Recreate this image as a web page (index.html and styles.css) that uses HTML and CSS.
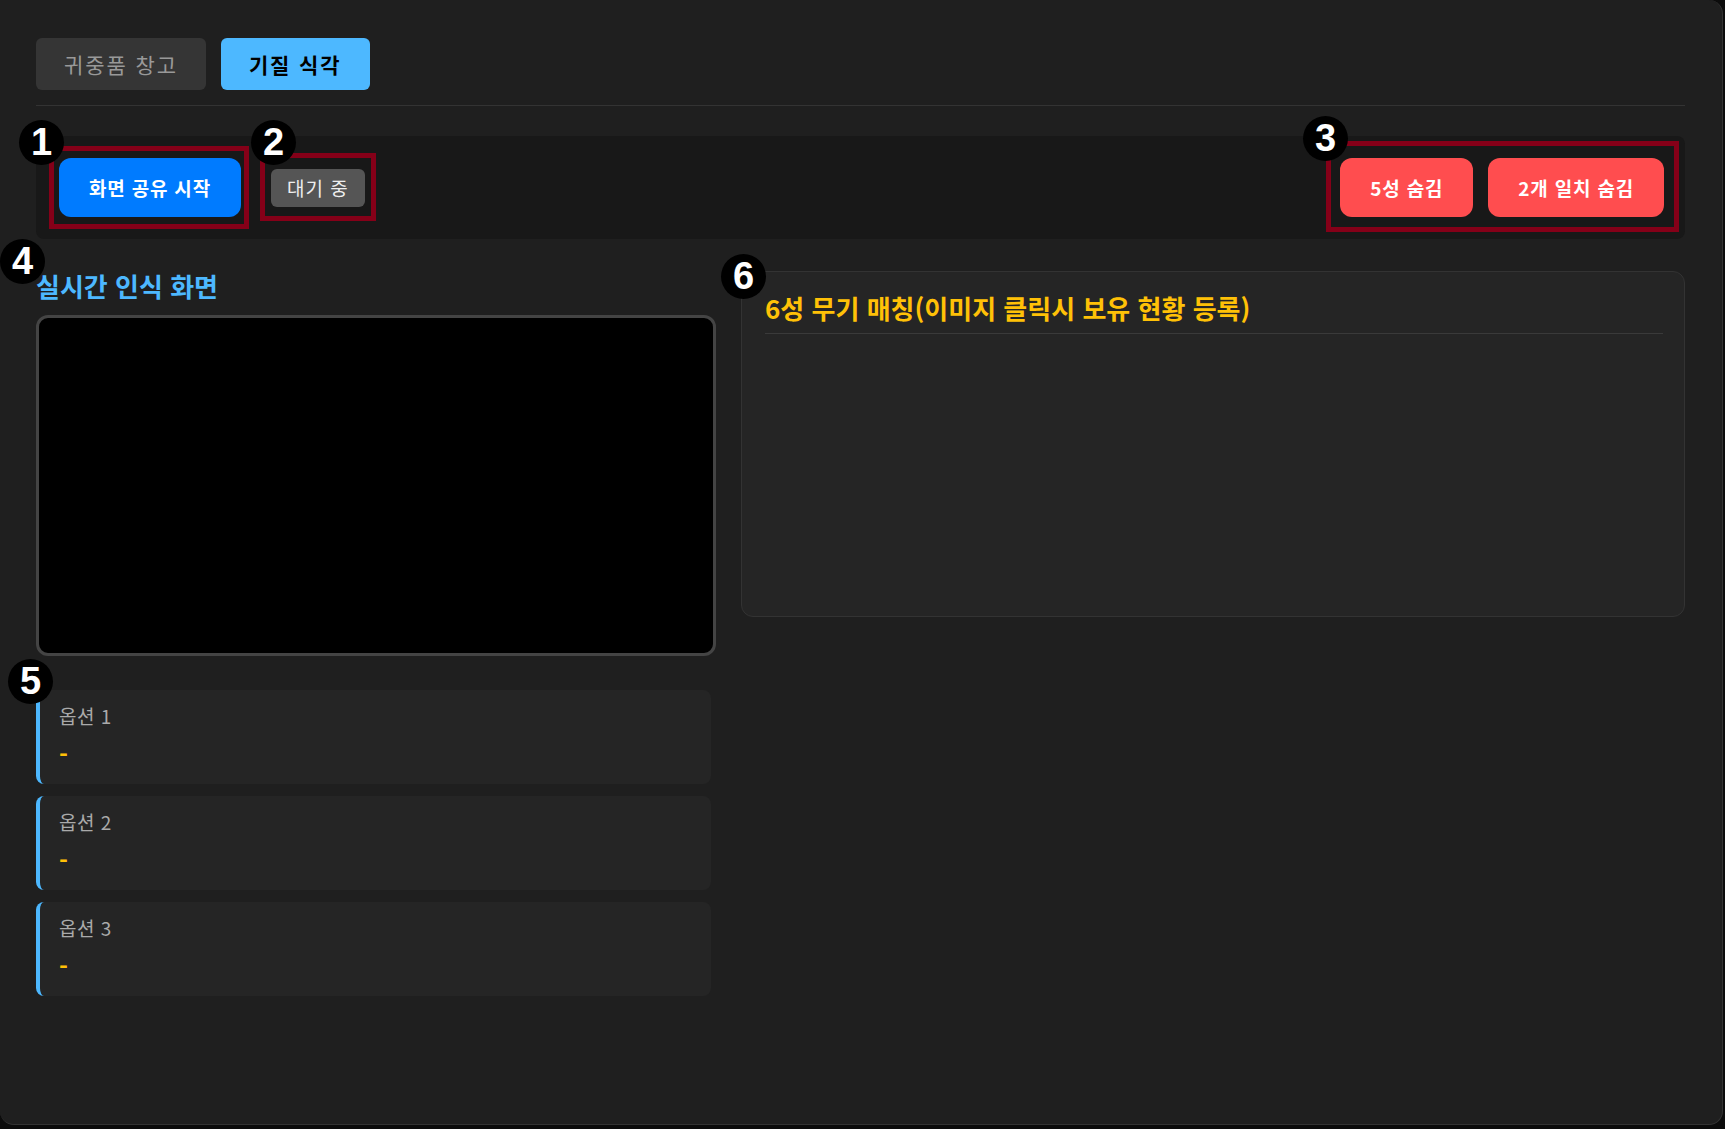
FILE: index.html
```html
<!DOCTYPE html>
<html lang="ko">

<head>
  <meta charset="UTF-8" />
  <meta name="viewport" content="width=device-width, initial-scale=1" />
  <title>기질 식각</title>
  <link rel="stylesheet" href="styles.css">
</head>

<body>

  <div class="app">
    <div class="tabs">
      <button class="tab">귀중품 창고</button>
      <button class="tab active">기질 식각</button>
    </div>

    <div class="controls">
      <div class="controls-left">
        <button class="btn-share" id="shareBtn">화면 공유 시작</button>
        <span class="status" id="status">대기 중</span>
      </div>
      <div class="controls-right">
        <button class="btn-hide">5성 숨김</button>
        <button class="btn-hide">2개 일치 숨김</button>
      </div>
    </div>

    <div class="main">
      <div class="left-col">
        <h3 class="section-title">실시간 인식 화면</h3>
        <div class="video"></div>

        <div class="options">
          <div class="option-card">
            <div class="option-label">옵션 1</div>
            <div class="option-value">-</div>
          </div>
          <div class="option-card">
            <div class="option-label">옵션 2</div>
            <div class="option-value">-</div>
          </div>
          <div class="option-card">
            <div class="option-label">옵션 3</div>
            <div class="option-value">-</div>
          </div>
        </div>
      </div>

      <div class="right-col">
        <div class="match-panel">
          <h3 class="match-title">6성 무기 매칭(이미지 클릭시 보유 현황 등록)</h3>
        </div>
      </div>
    </div>

    <!-- guide marks -->
    <div class="mark-box box-1"></div>
    <div class="mark-box box-2"></div>
    <div class="mark-box box-3"></div>
    <div class="mark-num num-1">1</div>
    <div class="mark-num num-2">2</div>
    <div class="mark-num num-3">3</div>
    <div class="mark-num num-4">4</div>
    <div class="mark-num num-5">5</div>
    <div class="mark-num num-6">6</div>
  </div>

</body>

</html>
```

FILE: styles.css
```css
/* Basic reset */
* {
  box-sizing: border-box;
}

body {
  margin: 0;
  background: #0c0c0c;
  font-family: 'Noto Sans CJK KR', 'Noto Sans', sans-serif;
  color: #eee;
}

.app {
  position: relative;
  width: 1723px;
  height: 1125px;
  padding: 38px 37px 40px 36px;
  background: #1f1f1f;
  border-right: 1px solid #333;
  border-bottom: 1px solid #333;
  border-radius: 0 14px 14px 14px;
}

/* Tabs */
.tabs {
  display: flex;
  gap: 15px;
  padding-bottom: 15px;
  border-bottom: 1px solid #333;
}

.tab {
  height: 52px;
  padding: 0 28px;
  border: none;
  border-radius: 6px;
  background: #353535;
  color: #999;
  font-family: inherit;
  font-size: 21px;
  letter-spacing: 1.9px;
  cursor: pointer;
}

.tab.active {
  background: #4db8ff;
  color: #000;
  font-weight: bold;
}

/* Control bar */
.controls {
  margin-top: 30px;
  display: flex;
  justify-content: space-between;
  align-items: center;
  padding: 22px 21px 22px 23px;
  background: #181818;
  border-radius: 8px;
}

.controls-left {
  display: flex;
  align-items: center;
  gap: 30px;
}

.controls-right {
  display: flex;
  gap: 15px;
}

.btn-share,
.btn-hide {
  height: 59px;
  padding: 0 30px;
  border: none;
  border-radius: 12px;
  color: #fff;
  font-family: inherit;
  font-size: 19px;
  font-weight: bold;
  letter-spacing: 0.8px;
  cursor: pointer;
}

.btn-share {
  background: #007bff;
}

.btn-hide {
  background: #ff4d4f;
}

.status {
  display: inline-block;
  height: 38px;
  line-height: 38px;
  padding: 0 16px;
  background: #555;
  border-radius: 6px;
  color: #eee;
  font-size: 19px;
  letter-spacing: 1px;
}

/* Main area */
.main {
  margin-top: 32px;
  display: grid;
  grid-template-columns: 680px 1fr;
  gap: 25px;
  align-items: start;
}

.section-title {
  margin: 0;
  color: #4db8ff;
  font-size: 26px;
  line-height: 30px;
}

.video {
  margin-top: 14px;
  width: 680px;
  height: 341px;
  background: #000;
  border: 3px solid #444;
  border-radius: 12px;
}

.options {
  margin-top: 34px;
  display: flex;
  flex-direction: column;
  gap: 12px;
  width: 675px;
}

.option-card {
  height: 94px;
  padding: 14px 20px 16px 19px;
  background: #252525;
  border-left: 4px solid #4db8ff;
  border-radius: 8px;
}

.option-label {
  color: #aaa;
  font-size: 19px;
  line-height: 24px;
  letter-spacing: 0.5px;
}

.option-value {
  margin-top: 12px;
  color: #ffc107;
  font-size: 24px;
  font-weight: bold;
  line-height: 28px;
}

.match-panel {
  height: 346px;
  padding: 21px 21px 22px 23px;
  background: #252525;
  border: 1px solid #333;
  border-radius: 12px;
}

.match-title {
  margin: 0;
  padding-bottom: 10px;
  border-bottom: 1px solid #3a3a3a;
  color: #ffc107;
  font-size: 26px;
  line-height: 30px;
}

/* Guide marks drawn over the page */
.mark-box {
  position: absolute;
  border: 5px solid #850018;
}

.box-1 {
  left: 49px;
  top: 146px;
  width: 200px;
  height: 83px;
}

.box-2 {
  left: 260px;
  top: 153px;
  width: 116px;
  height: 68px;
}

.box-3 {
  left: 1326px;
  top: 141px;
  width: 353px;
  height: 91px;
}

.mark-num {
  position: absolute;
  width: 45px;
  height: 45px;
  margin: -22px 0 0 -22px;
  border-radius: 50%;
  background: #000;
  color: #fff;
  font-family: 'Liberation Sans', Arial, sans-serif;
  font-size: 38px;
  font-weight: bold;
  line-height: 45px;
  text-align: center;
}

.num-1 { left: 41px; top: 142px; }
.num-2 { left: 273px; top: 142px; }
.num-3 { left: 1325px; top: 138px; }
.num-4 { left: 22px; top: 261px; }
.num-5 { left: 30px; top: 681px; }
.num-6 { left: 743px; top: 276px; }
```
